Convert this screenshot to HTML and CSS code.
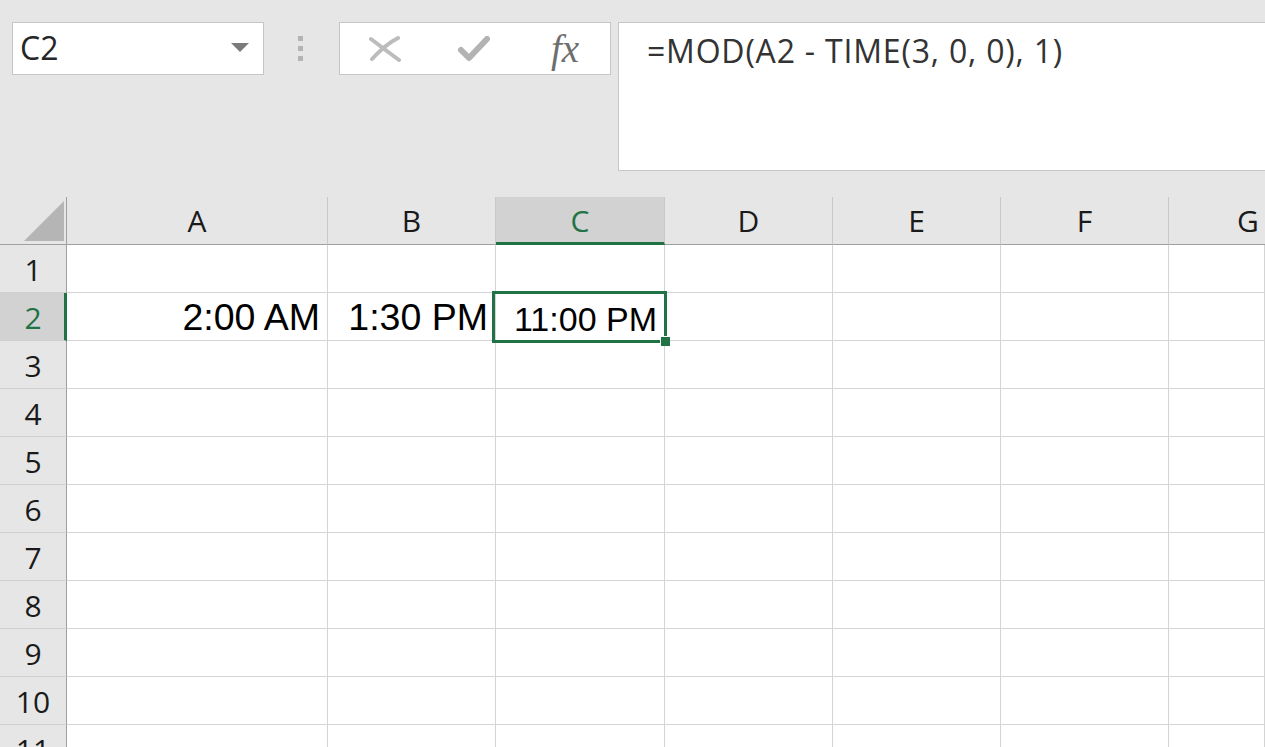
FILE: index.html
```html
<!DOCTYPE html>
<html lang="en">
<head>
    <meta charset="UTF-8">
    <title>Sheet</title>
    <link rel="stylesheet" href="styles.css">
</head>
<body>
    <div class="toolbar">
        <div class="namebox">
            <span class="name">C2</span>
            <svg class="caret" width="18" height="10" viewBox="0 0 18 10"><polygon points="0,0 18,0 9,9" fill="#7a7a7a"/></svg>
        </div>
        <div class="dots"><i></i><i></i><i></i></div>
        <div class="fxbox">
            <svg class="ico-x" width="32" height="26" viewBox="0 0 32 26">
                <path d="M2 3 Q15 13 30 24" stroke="#bcbcbc" stroke-width="4" fill="none" stroke-linecap="round"/>
                <path d="M29 2 Q17 8 3 23" stroke="#bcbcbc" stroke-width="4" fill="none" stroke-linecap="round"/>
            </svg>
            <svg class="ico-ok" width="32" height="26" viewBox="0 0 32 26">
                <path d="M3 14 L11 22 L29 3" stroke="#b3b3b3" stroke-width="6" fill="none" stroke-linecap="round" stroke-linejoin="round"/>
            </svg>
            <span class="fx">fx</span>
        </div>
        <div class="formula">=MOD(A2 - TIME(3, 0, 0), 1)</div>
    </div>

    <div class="sheet">
        <div class="corner"><svg width="67" height="48" viewBox="0 0 67 48"><polygon points="24,44 64,4 64,44" fill="#b5b5b5"/></svg></div>
        <div class="colhead">A</div>
        <div class="colhead">B</div>
        <div class="colhead active">C</div>
        <div class="colhead">D</div>
        <div class="colhead">E</div>
        <div class="colhead">F</div>
        <div class="colhead last">G</div>

        <div class="rowhead">1</div>
        <div class="cell"></div><div class="cell"></div><div class="cell"></div><div class="cell"></div><div class="cell"></div><div class="cell"></div><div class="cell"></div>

        <div class="rowhead active">2</div>
        <div class="cell num">2:00 AM</div>
        <div class="cell num">1:30 PM</div>
        <div class="cell num small selected">11:00 PM<span class="sel"><span class="handle"></span></span></div>
        <div class="cell"></div><div class="cell"></div><div class="cell"></div><div class="cell"></div>

        <div class="rowhead">3</div>
        <div class="cell"></div><div class="cell"></div><div class="cell"></div><div class="cell"></div><div class="cell"></div><div class="cell"></div><div class="cell"></div>
        <div class="rowhead">4</div>
        <div class="cell"></div><div class="cell"></div><div class="cell"></div><div class="cell"></div><div class="cell"></div><div class="cell"></div><div class="cell"></div>
        <div class="rowhead">5</div>
        <div class="cell"></div><div class="cell"></div><div class="cell"></div><div class="cell"></div><div class="cell"></div><div class="cell"></div><div class="cell"></div>
        <div class="rowhead">6</div>
        <div class="cell"></div><div class="cell"></div><div class="cell"></div><div class="cell"></div><div class="cell"></div><div class="cell"></div><div class="cell"></div>
        <div class="rowhead">7</div>
        <div class="cell"></div><div class="cell"></div><div class="cell"></div><div class="cell"></div><div class="cell"></div><div class="cell"></div><div class="cell"></div>
        <div class="rowhead">8</div>
        <div class="cell"></div><div class="cell"></div><div class="cell"></div><div class="cell"></div><div class="cell"></div><div class="cell"></div><div class="cell"></div>
        <div class="rowhead">9</div>
        <div class="cell"></div><div class="cell"></div><div class="cell"></div><div class="cell"></div><div class="cell"></div><div class="cell"></div><div class="cell"></div>
        <div class="rowhead">10</div>
        <div class="cell"></div><div class="cell"></div><div class="cell"></div><div class="cell"></div><div class="cell"></div><div class="cell"></div><div class="cell"></div>
        <div class="rowhead">11</div>
        <div class="cell"></div><div class="cell"></div><div class="cell"></div><div class="cell"></div><div class="cell"></div><div class="cell"></div><div class="cell"></div>
    </div>
</body>
</html>
```

FILE: styles.css
```css
html, body {
    margin: 0;
    padding: 0;
    height: 100%;
    overflow: hidden;
    background-color: #e6e6e6;
}
body {
    font-family: "Open Sans", "Noto Sans", sans-serif;
}
.toolbar {
    display: flex;
    align-items: flex-start;
    height: 197px;
    padding: 22px 0 0 12px;
    box-sizing: border-box;
}
.namebox {
    width: 252px;
    height: 53px;
    box-sizing: border-box;
    background: #fff;
    border: 1px solid #c6c6c6;
    display: flex;
    align-items: center;
    justify-content: space-between;
    padding: 0 14px 0 7px;
}
.name {
    font-size: 32px;
    color: #262626;
    line-height: 1;
    margin-top: -1px;
}
.caret {
    margin-top: -2px;
}
.dots {
    display: flex;
    flex-direction: column;
    gap: 5px;
    margin: 14px 36px 0 34px;
}
.dots i {
    display: block;
    width: 5px;
    height: 5px;
    background: #b4b4b4;
}
.fxbox {
    width: 272px;
    height: 53px;
    box-sizing: border-box;
    background: #fff;
    border: 1px solid #c6c6c6;
    display: flex;
    align-items: center;
}
.ico-x {
    margin-left: 29px;
}
.ico-ok {
    margin-left: 57px;
}
.fx {
    margin-left: 61px;
    font-family: "Liberation Serif", serif;
    font-style: italic;
    font-size: 39px;
    color: #6e6e6e;
    line-height: 1;
    margin-top: 0;
}
.formula {
    flex: 1;
    height: 149px;
    box-sizing: border-box;
    margin-left: 7px;
    margin-right: -2px;
    background: #fff;
    border: 1px solid #c6c6c6;
    padding: 8px 0 0 28px;
    font-size: 32px;
    letter-spacing: 0.8px;
    color: #333;
    line-height: 40px;
}
.sheet {
    display: grid;
    grid-template-columns: 67px 261px 168px 169px 168px 168px 168px 1fr;
    grid-template-rows: 48px;
    grid-auto-rows: 48px;
    background: #fff;
}
.corner {
    background: #e6e6e6;
    border-right: 1px solid #9f9f9f;
    border-bottom: 1px solid #9f9f9f;
    box-sizing: border-box;
}
.corner svg {
    display: block;
}
.colhead {
    background: #e6e6e6;
    border-right: 1px solid #c8c8c8;
    border-bottom: 1px solid #9f9f9f;
    box-sizing: border-box;
    display: flex;
    align-items: center;
    justify-content: center;
    font-size: 30px;
    color: #1a1a1a;
}
.colhead.last {
    border-right: none;
    justify-content: flex-start;
    padding-left: 68px;
}
.colhead.active {
    background: #d2d2d2;
    color: #217346;
    border-bottom: 3px solid #217346;
    padding-top: 2px;
}
.rowhead {
    background: #e6e6e6;
    border-right: 1px solid #9f9f9f;
    border-bottom: 1px solid #d0d0d0;
    box-sizing: border-box;
    display: flex;
    align-items: center;
    justify-content: center;
    font-size: 30px;
    color: #1a1a1a;
    padding-top: 2px;
}
.rowhead.active {
    background: #d2d2d2;
    color: #217346;
    border-right: 3px solid #217346;
    padding-left: 2px;
}
.cell {
    border-right: 1px solid #d4d4d4;
    border-bottom: 1px solid #d4d4d4;
    box-sizing: border-box;
}
.cell.num {
    display: flex;
    align-items: center;
    justify-content: flex-end;
    padding-right: 7px;
    padding-top: 2px;
    font-family: "Liberation Sans", Arial, sans-serif;
    font-size: 37.5px;
    color: #000;
}
.cell.small {
    font-size: 34px;
    padding-top: 5px;
}
.selected {
    position: relative;
}
.sel {
    position: absolute;
    left: -4px;
    right: -3px;
    top: -2px;
    bottom: -3px;
    border: 3px solid #217346;
}
.handle {
    position: absolute;
    right: -6px;
    bottom: -6px;
    width: 9px;
    height: 9px;
    background: #217346;
    border-left: 1px solid #fff;
    border-top: 1px solid #fff;
}
```
